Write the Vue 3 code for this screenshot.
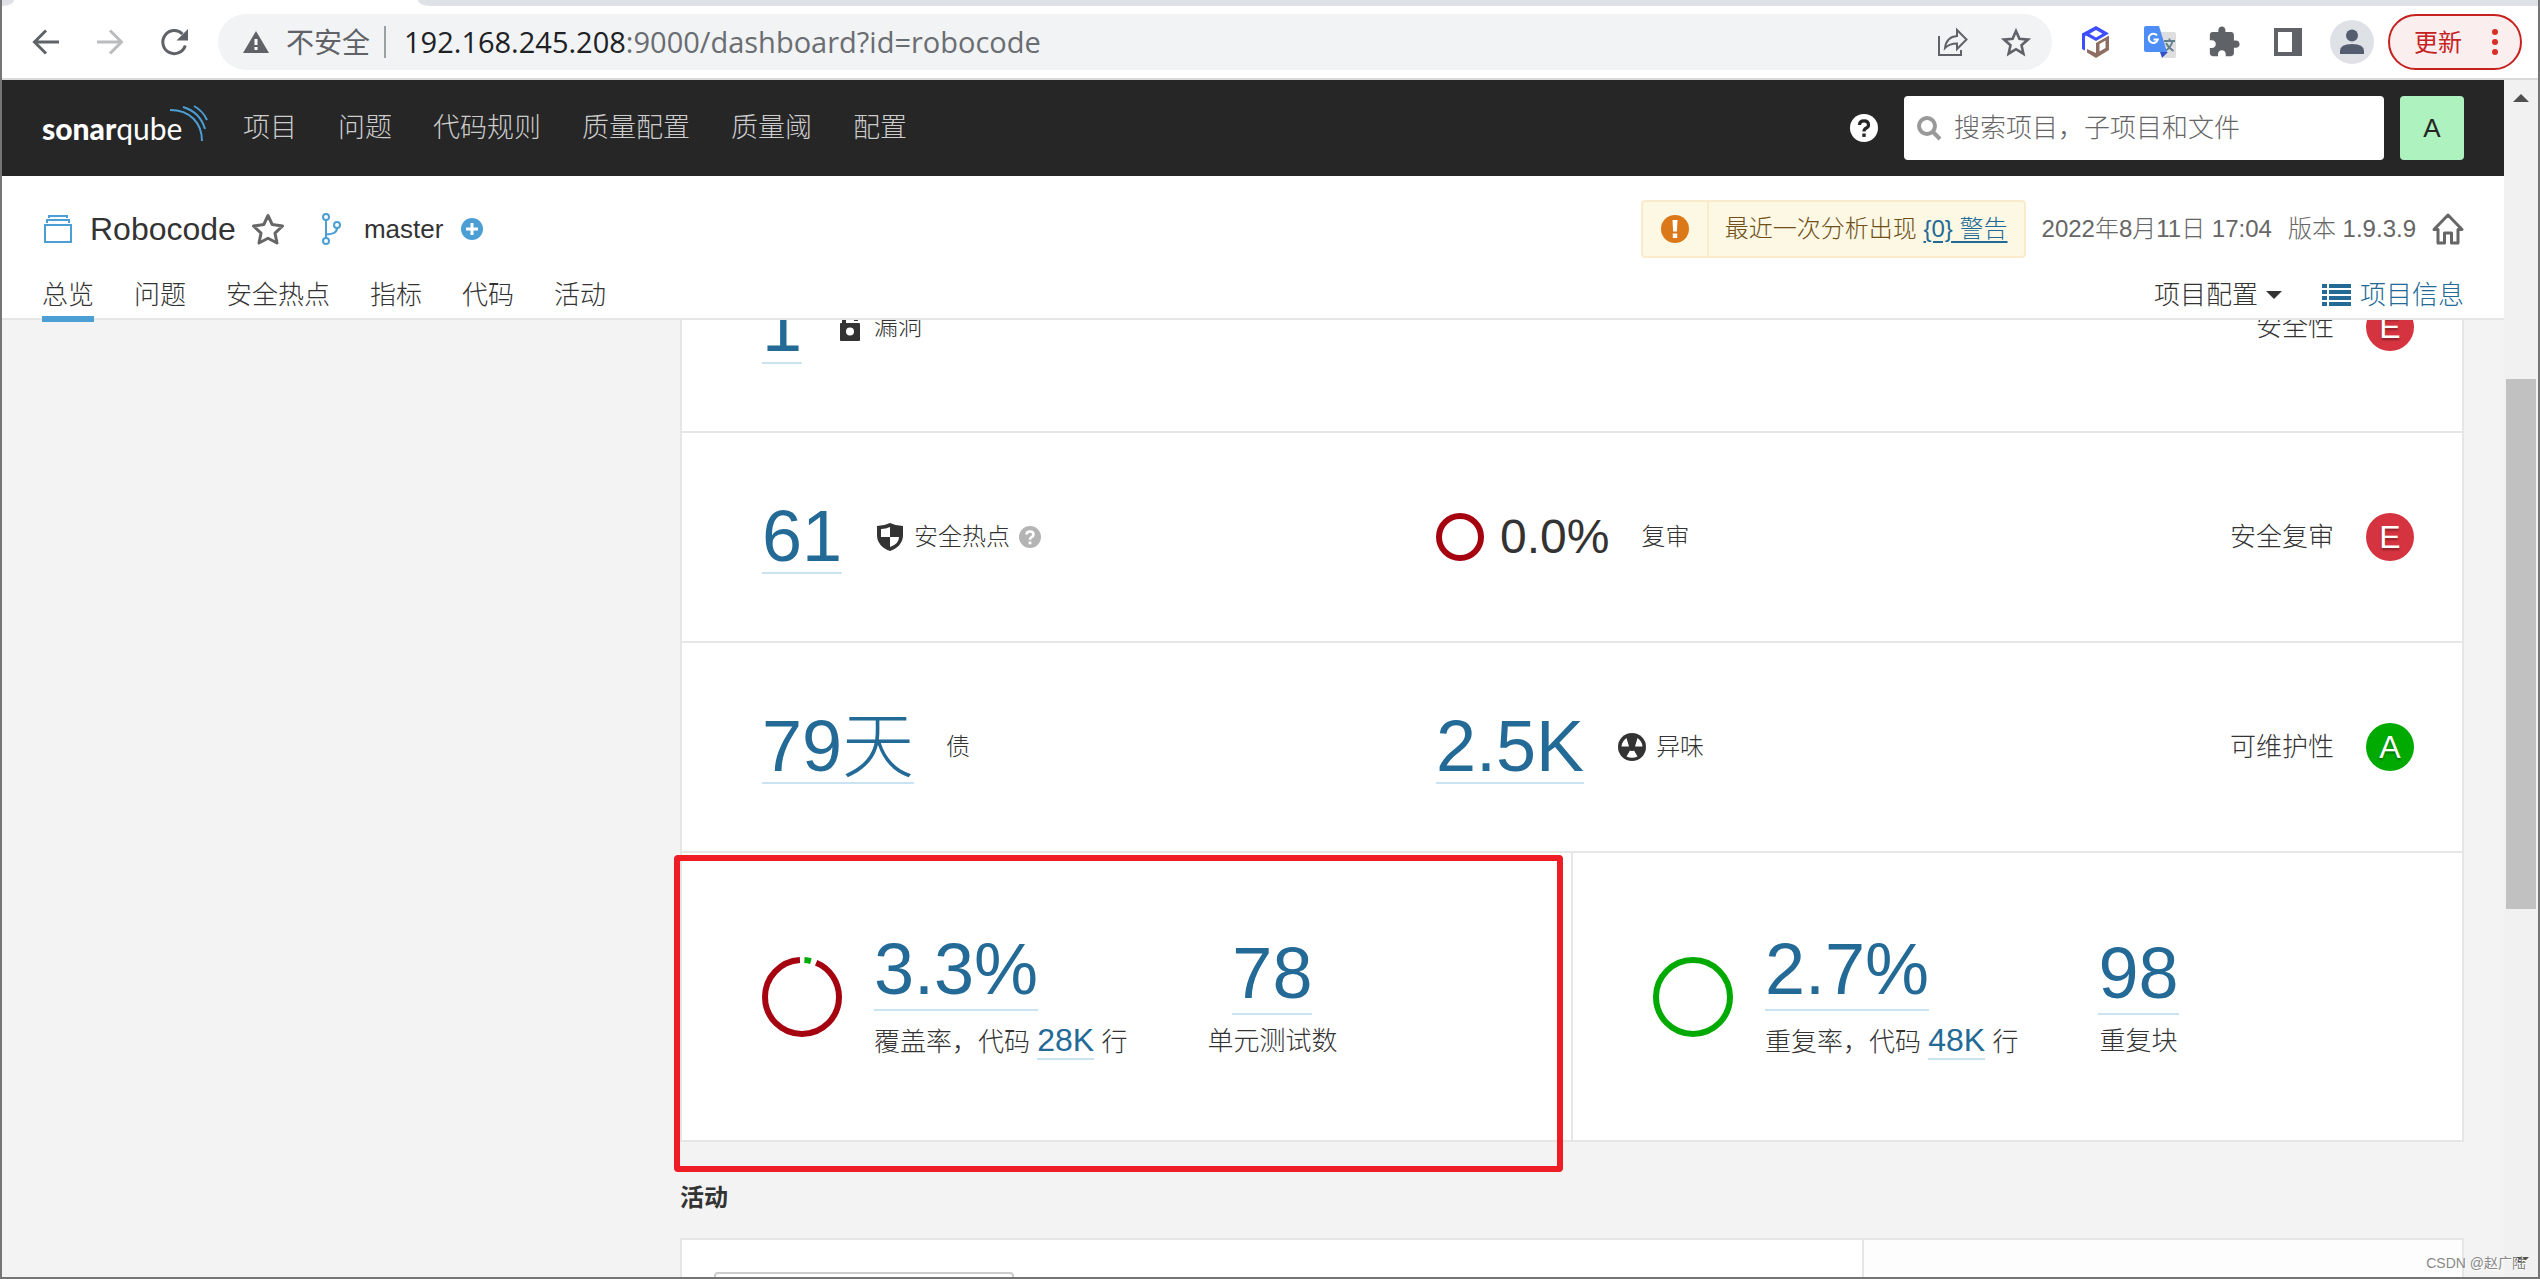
<script setup>
import { ref } from 'vue'

const globalNav = ['项目', '问题', '代码规则', '质量配置', '质量阈', '配置']
const projectTabs = ['总览', '问题', '安全热点', '指标', '代码', '活动']
const activeTab = ref('总览')
const query = ref('')
</script>

<template>
  <div class="window">
    <div class="tab-strip">
      <span class="strip-left"></span>
      <span class="strip-active"></span>
      <span class="strip-right"></span>
    </div>

    <div class="toolbar">
      <div class="nav-buttons">
        <button type="button" aria-label="后退">
          <svg width="32" height="32" viewBox="0 0 32 32" fill="none" stroke="#5f6368" stroke-width="3"><path d="M29 16H5M16 4.500L4.500 16L16 27.500" /></svg>
        </button>
        <button type="button" aria-label="前进">
          <svg width="32" height="32" viewBox="0 0 32 32" fill="none" stroke="#babcbe" stroke-width="3"><path d="M3 16H27M16 4.500L27.500 16L16 27.500" /></svg>
        </button>
        <button type="button" aria-label="重新加载">
          <svg width="32" height="32" viewBox="0 0 32 32"><path d="M27.300 19.500A11.500 11.500 0 1 1 24.500 8" fill="none" stroke="#5f6368" stroke-width="3" /><path d="M30 3V14.500H18.500Z" fill="#5f6368" /></svg>
        </button>
      </div>
      <div class="omnibox">
        <svg width="28" height="26" viewBox="0 0 28 26"><path d="M14 2L27 24H1Z" fill="#5f6368" /><path d="M12.500 10h3v6h-3zM12.500 18h3v3h-3z" fill="#fff" /></svg>
        <span class="insecure">不安全</span>
        <span class="omni-sep"></span>
        <span class="url"><b>192.168.245.208</b>:9000/dashboard?id=robocode</span>
        <button type="button" aria-label="分享">
          <svg width="32" height="32" viewBox="0 0 32 32" fill="none" stroke="#5f6368" stroke-width="2"><path d="M3 10V29H25V24" /><path d="M9 22C10 14 14 10.500 21 10V4L30.500 13.500L21 23V17.500C15 17.500 12 19 9 22Z" /></svg>
        </button>
        <button type="button" aria-label="收藏">
          <svg width="32" height="32" viewBox="0 0 32 32" fill="none" stroke="#5f6368" stroke-width="2.600"><path d="M16 5L19.400 12.800L28 13.600L21.500 19.300L23.400 27.700L16 23.200L8.600 27.700L10.500 19.300L4 13.600L12.600 12.800Z" /></svg>
        </button>
      </div>
      <div class="extensions">
        <button type="button" aria-label="扩展 1">
          <svg width="28" height="32" viewBox="0 0 28 32"><path d="M14 0L27 7.500L14 15L4 9.500L3 10.500V24.500L0 23V7.500ZM14 4L7.500 7.800L14 11.600L20.500 7.800Z" fill="#3d4dff" fill-rule="evenodd" /><path d="M27 9.500V24L14 32L5 26.500V23L14 27V17ZM23.500 14.500L17.500 18V25.500L23.500 22Z" fill="#8d6e63" fill-rule="evenodd" /></svg>
        </button>
        <button type="button" aria-label="翻译">
          <svg width="32" height="32" viewBox="0 0 32 32"><path d="M14 6H30Q32 6 32 8V30Q32 32 30 32H20Z" fill="#dedede" /><path d="M20 15h11M25.500 12.500v2.500M28.500 15.500Q26.500 22 20.500 25.500M22 17Q25 22.500 29.500 25" fill="none" stroke="#607d8b" stroke-width="1.800" /><path d="M16 26H24L18 32Z" fill="#3350c4" /><path d="M2 0H15L23 26H2Q0 26 0 24V2Q0 0 2 0Z" fill="#4e8df5" /><path d="M13 9.500A4.600 4.600 0 1 0 13.800 13.500H9.500" fill="none" stroke="#fff" stroke-width="2" /></svg>
        </button>
        <button type="button" aria-label="扩展程序">
          <svg width="34" height="34" viewBox="0 0 24 24" fill="#5f6368"><path d="M20.500 11H19V7c0-1.100-.9-2-2-2h-4V3.500C13 2.120 11.880 1 10.500 1S8 2.120 8 3.500V5H4c-1.100 0-2 .9-2 2v3.800h1.500c1.490 0 2.700 1.210 2.700 2.700S4.990 16.200 3.500 16.200H2V20c0 1.100.9 2 2 2h3.800v-1.500c0-1.490 1.210-2.700 2.700-2.700s2.700 1.210 2.700 2.700V22H17c1.100 0 2-.9 2-2v-4h1.500c1.380 0 2.500-1.120 2.500-2.500S21.880 11 20.500 11z" /></svg>
        </button>
        <button type="button" aria-label="侧边栏">
          <svg width="28" height="28" viewBox="0 0 28 28"><path d="M0 0H28V28H0ZM4 4V24H18V4Z" fill="#5f6368" fill-rule="evenodd" /></svg>
        </button>
        <button type="button" aria-label="用户">
          <svg width="44" height="44" viewBox="0 0 44 44"><circle cx="22" cy="22" r="22" fill="#dee1e6" /><circle cx="22" cy="15.500" r="6" fill="#555e70" /><path d="M10 34V31Q10 24 22 24T34 31V34Z" fill="#555e70" /></svg>
        </button>
      </div>
      <button type="button" class="update">
        <span>更新</span>
        <svg width="6" height="28" viewBox="0 0 6 28" fill="#d93025"><circle cx="3" cy="4" r="3" /><circle cx="3" cy="14" r="3" /><circle cx="3" cy="24" r="3" /></svg>
      </button>
    </div>

    <div class="viewport">
      <div class="page">
        <header class="global">
          <a href="#" class="logo" aria-label="sonarqube">
            <svg width="166" height="46" viewBox="0 0 166 46">
              <text x="0" y="35" fill="#fff" class="logo-text"><tspan class="logo-bold">sonar</tspan><tspan>qube</tspan></text>
              <g fill="none" stroke="#4b9fd5" stroke-width="2"><path d="M128 5C148 5 160 18 160 36" /><path d="M141 2Q158 7 163 24" /><path d="M152 1Q161 6 165 15" /></g>
            </svg>
          </a>
          <nav class="global-nav">
            <a v-for="item in globalNav" :key="item" href="#">{{ item }}</a>
          </nav>
          <button type="button" class="help" aria-label="帮助">
            <svg width="28" height="28" viewBox="0 0 28 28"><circle cx="14" cy="14" r="14" fill="#fff" /><path d="M9.500 11Q9.500 6.800 14 6.800T18.500 11Q18.500 13 16 14.200Q14 15.200 14 17.500" fill="none" stroke="#262626" stroke-width="3.200" /><path d="M12.300 19.500h3.400v3.400h-3.400z" fill="#262626" /></svg>
          </button>
          <label class="search">
            <svg width="26" height="26" viewBox="0 0 26 26" fill="none" stroke="#999" stroke-width="4"><circle cx="11" cy="11" r="8" /><path d="M17 17L24 24" /></svg>
            <input v-model="query" type="search" placeholder="搜索项目，子项目和文件" aria-label="搜索">
          </label>
          <button type="button" class="avatar">A</button>
        </header>

        <div class="context">
          <div class="context-top">
            <svg width="32" height="32" viewBox="0 0 32 32" fill="none" stroke="#4b9fd5" stroke-width="2"><path d="M3 12H29V29H3Z" /><path d="M5 10V7H27V10M7 5V3H25V5" /></svg>
            <h1>Robocode</h1>
            <button type="button" class="fav" aria-label="收藏项目">
              <svg width="36" height="34" viewBox="0 0 36 34" fill="none" stroke="#666" stroke-width="3" stroke-linejoin="round"><path d="M18 3.500L22.200 12.500L32.500 14L25 21.200L27 31L18 26.200L9 31L11 21.200L3.500 14L13.800 12.500Z" /></svg>
            </button>
            <svg class="branch" width="32" height="34" viewBox="0 0 32 34" fill="none" stroke="#4b9fd5" stroke-width="2"><circle cx="10" cy="5" r="3" /><circle cx="10" cy="29" r="3" /><circle cx="21" cy="13" r="3" /><path d="M10 8V26M21 16C21 21 17 22 10 22.500" /></svg>
            <span class="branch-name">master</span>
            <svg width="22" height="22" viewBox="0 0 22 22"><circle cx="11" cy="11" r="11" fill="#4b9fd5" /><path d="M11 5V17M5 11H17" stroke="#fff" stroke-width="3" /></svg>
            <div class="alert">
              <span class="alert-icon">
                <svg width="28" height="28" viewBox="0 0 28 28"><circle cx="14" cy="14" r="14" fill="#db781a" /><path d="M11.500 5h5l-.6 11.500h-3.800zM11.800 18.500h4.400v4.400h-4.400z" fill="#fff" /></svg>
              </span>
              <span class="alert-text">最近一次分析出现 <a href="#">{0} 警告</a></span>
            </div>
            <span class="meta">2022年8月11日 17:04</span>
            <span class="meta">版本 1.9.3.9</span>
            <a href="#" class="home" aria-label="主页">
              <svg width="32" height="32" viewBox="0 0 32 32" fill="none" stroke="#666" stroke-width="3" stroke-linejoin="round"><path d="M16 2L30 16.500H26V30H19.500V20H12.500V30H6V16.500H2Z" /></svg>
            </a>
          </div>
          <div class="context-tabs">
            <nav>
              <a v-for="tab in projectTabs" :key="tab" href="#" :class="{ active: tab === activeTab }" @click.prevent="activeTab = tab">{{ tab }}</a>
            </nav>
            <button type="button" class="settings">项目配置<span class="caret"></span></button>
            <a href="#" class="info">
              <svg width="30" height="24" viewBox="0 0 30 24" fill="#236a97"><path d="M0 1h5v4H0zM7 1h22v4H7zM0 7h5v4H0zM7 7h22v4H7zM0 13h5v4H0zM7 13h22v4H7zM0 19h5v4H0zM7 19h22v4H7z" /></svg>项目信息</a>
          </div>
        </div>

        <main class="content">
          <section class="card measures">
            <div class="row">
              <div class="measure">
                <a href="#" class="big">1</a>
                <svg width="32" height="32" viewBox="0 0 32 32"><path d="M10 14V7Q10 3 16 3T22 7V10" fill="none" stroke="#333" stroke-width="4" /><path d="M7 12H25Q26 12 26 13V29Q26 30 25 30H7Q6 30 6 29V13Q6 12 7 12ZM16 16.500A4 4 0 1 0 16 24.500A4 4 0 1 0 16 16.500Z" fill="#333" fill-rule="evenodd" /></svg>
                <span>漏洞</span>
              </div>
              <div class="measure"></div>
              <div class="rating">安全性<span class="badge e">E</span></div>
            </div>
            <div class="row">
              <div class="measure">
                <a href="#" class="big">61</a>
                <svg width="32" height="32" viewBox="0 0 32 32"><path d="M16 2Q22 5 29 5V14Q29 25 16 30Q3 25 3 14V5Q10 5 16 2Z" fill="#333" /><path d="M16 6V16H7V8Q12 8 16 6ZM16 16H25Q25 23 16 26Z" fill="#fff" /></svg>
                <span>安全热点</span>
                <svg class="tip" width="24" height="24" viewBox="0 0 24 24"><circle cx="12" cy="12" r="11" fill="#b4b4b4" /><path d="M8.500 9.500Q8.500 6.500 12 6.500T15.500 9.500Q15.500 11.200 13.500 12.200Q12 13 12 14.800" fill="none" stroke="#fff" stroke-width="2.600" /><path d="M10.600 16.500h2.800v2.800h-2.800z" fill="#fff" /></svg>
              </div>
              <div class="measure">
                <svg class="ring" width="48" height="48" viewBox="0 0 48 48"><circle cx="24" cy="24" r="21" fill="none" stroke="#a4030f" stroke-width="6" /></svg>
                <span class="percent">0.0%</span>
                <span class="reviewed">复审</span>
              </div>
              <div class="rating">安全复审<span class="badge e">E</span></div>
            </div>
            <div class="row">
              <div class="measure">
                <a href="#" class="big">79天</a>
                <span>债</span>
              </div>
              <div class="measure">
                <a href="#" class="big">2.5K</a>
                <svg width="32" height="32" viewBox="0 0 32 32"><circle cx="16" cy="16" r="14" fill="#333" /><path d="M13 15.500H5.500Q6 10 10.500 7ZM19 15.500H26.500Q26 10 21.500 7ZM14 19.500L10.500 25.500Q16 28 21.500 25.500L18 19.500Q16 20.500 14 19.500Z" fill="#fff" /></svg>
                <span>异味</span>
              </div>
              <div class="rating">可维护性<span class="badge a">A</span></div>
            </div>
            <div class="halves">
              <div class="half">
                <svg width="80" height="80" viewBox="0 0 80 80"><g transform="rotate(-90 40 40)" fill="none" stroke-width="6"><circle cx="40" cy="40" r="37" stroke="#a4030f" stroke-dasharray="215.500 17" stroke-dashoffset="-14.500" /><circle cx="40" cy="40" r="37" stroke="#00aa00" stroke-dasharray="6.500 226" stroke-dashoffset="-2.500" /></g></svg>
                <div class="ratio">
                  <a href="#" class="big">3.3%</a>
                  <p>覆盖率，代码 <a href="#">28K</a> 行</p>
                </div>
                <div class="count">
                  <a href="#" class="big">78</a>
                  <span>单元测试数</span>
                </div>
                <div class="highlight"></div>
              </div>
              <div class="half">
                <svg width="80" height="80" viewBox="0 0 80 80"><circle cx="40" cy="40" r="37" fill="none" stroke="#00aa00" stroke-width="6" /></svg>
                <div class="ratio">
                  <a href="#" class="big">2.7%</a>
                  <p>重复率，代码 <a href="#">48K</a> 行</p>
                </div>
                <div class="count">
                  <a href="#" class="big">98</a>
                  <span>重复块</span>
                </div>
              </div>
            </div>
          </section>

          <h2>活动</h2>
          <section class="card activity">
            <div class="graph"><select aria-label="图表"></select></div>
            <div class="events"></div>
          </section>
        </main>
      </div>

      <div class="scrollbar">
        <span class="arrow up"></span>
        <span class="track-before"></span>
        <span class="thumb"></span>
        <span class="track-after"></span>
        <span class="arrow down"></span>
      </div>
    </div>
    <span class="watermark">CSDN @赵广陆</span>
  </div>
</template>

<style>
body {
  margin: 0;
}
</style>

<style scoped>
* {
  box-sizing: border-box;
}
svg {
  display: block;
  flex: none;
}
a {
  color: #236a97;
  text-decoration: none;
}
button {
  padding: 0;
  border: 0;
  background: none;
  font: inherit;
  color: inherit;
}
.window {
  position: relative;
  display: flex;
  flex-direction: column;
  height: 100vh;
  overflow: hidden;
  border: 2px solid #757575;
  border-top: 0;
  background: #fff;
  color: #333;
  font-family: "Liberation Sans", "Noto Sans CJK SC", sans-serif;
  font-size: 26px;
  font-weight: 300;
  line-height: 32px;
  white-space: nowrap;
}
.tab-strip {
  display: flex;
  flex: none;
  height: 6px;
}
.strip-left {
  width: 12px;
  background: #dee1e6;
  border-bottom-right-radius: 12px 6px;
}
.strip-active {
  width: 404px;
}
.strip-right {
  flex: 1;
  background: #dee1e6;
  border-bottom-left-radius: 12px 6px;
}
.toolbar {
  display: flex;
  flex: none;
  align-items: center;
  height: 74px;
  padding: 0 16px 0 28px;
  border-bottom: 2px solid #dadada;
  font-family: "Open Sans", "Noto Sans CJK SC", sans-serif;
  font-weight: 400;
}
.nav-buttons {
  display: flex;
  gap: 32px;
  margin-right: 28px;
}
.omnibox {
  display: flex;
  flex: 1;
  align-items: center;
  height: 56px;
  padding: 0 20px 0 24px;
  border-radius: 28px;
  background: #f1f3f4;
  color: #5f6368;
  font-size: 28px;
}
.insecure {
  margin-left: 16px;
}
.omni-sep {
  width: 2px;
  height: 32px;
  margin: 0 18px 0 14px;
  background: #9aa0a6;
}
.url {
  flex: 1;
  color: #6a6d71;
  font-size: 29px;
}
.url b {
  font-weight: 400;
  color: #202124;
}
.omnibox button + button {
  margin-left: 32px;
}
.extensions {
  display: flex;
  align-items: center;
  gap: 20px;
  margin: 0 14px 0 22px;
}
.extensions button {
  display: flex;
  justify-content: center;
  width: 44px;
}
.update {
  display: flex;
  align-items: center;
  gap: 30px;
  height: 56px;
  padding: 0 22px 0 24px;
  border: 2px solid #c5221f;
  border-radius: 28px;
  background: #faeeee;
  color: #c5221f;
  font-size: 24px;
}
.viewport {
  display: flex;
  flex: 1;
  min-height: 0;
}
.page {
  display: flex;
  flex: 1;
  flex-direction: column;
  min-width: 0;
  background: #f3f3f3;
}
.global {
  display: flex;
  flex: none;
  align-items: center;
  height: 96px;
  padding: 0 40px;
  background: #262626;
}
.logo-text {
  font-family: Lato, sans-serif;
  font-size: 30px;
  font-weight: 400;
}
.logo-bold {
  font-weight: 900;
}
.global-nav {
  display: flex;
  flex: 1;
  gap: 41px;
  margin-left: 35px;
  font-size: 27px;
}
.global-nav a {
  color: #ccc;
}
.search {
  display: flex;
  align-items: center;
  gap: 12px;
  width: 480px;
  height: 64px;
  margin: 0 16px 0 26px;
  padding: 0 12px;
  border-radius: 4px;
  background: #fff;
}
.search input {
  flex: 1;
  min-width: 0;
  padding: 0;
  border: 0;
  outline: 0;
  background: none;
  font: inherit;
  line-height: normal;
  color: #333;
}
.search input::placeholder {
  color: #666;
}
.avatar {
  width: 64px;
  height: 64px;
  border-radius: 4px;
  background: #aef2c0;
  color: #262626;
}
.context {
  position: relative;
  z-index: 1;
  flex: none;
  height: 144px;
  padding: 24px 40px 0;
  border-bottom: 2px solid #e6e6e6;
  background: #fff;
}
.context-top {
  display: flex;
  align-items: center;
  height: 58px;
}
h1 {
  margin: 0 14px 0 16px;
  font-size: 32px;
  font-weight: 400;
}
.branch {
  margin-left: 30px;
}
.branch-name {
  margin: 0 18px 0 16px;
}
.alert {
  display: flex;
  height: 58px;
  margin-left: auto;
  border: 2px solid #faebcc;
  border-radius: 4px;
  background: #fcf8e3;
  color: #6f4f17;
  font-size: 24px;
  line-height: 54px;
}
.alert-icon {
  display: flex;
  align-items: center;
  padding: 0 18px;
  border-right: 2px solid #faebcc;
}
.alert-text {
  padding: 0 16px;
}
.alert a {
  text-decoration: underline;
  text-decoration-thickness: 2px;
  text-underline-offset: 4px;
}
.meta {
  margin-left: 16px;
  color: #666;
  font-size: 24px;
}
.home {
  margin-left: 16px;
}
.context-tabs {
  display: flex;
  height: 46px;
  margin-top: 14px;
  line-height: 46px;
}
.context-tabs nav {
  display: flex;
  flex: 1;
  gap: 40px;
}
.context-tabs nav a {
  height: 50px;
  border-bottom: 6px solid transparent;
  color: #333;
}
.context-tabs nav .active {
  border-color: #4b9fd5;
}
.settings {
  display: flex;
  align-items: center;
  gap: 8px;
  height: 46px;
}
.caret {
  border: 8px solid transparent;
  border-top-color: #333;
  border-bottom: 0;
}
.info {
  display: flex;
  align-items: center;
  gap: 8px;
  height: 46px;
  margin-left: 40px;
}
.content {
  flex: 1;
  min-height: 0;
  overflow: hidden;
  padding: 0 40px 0 678px;
}
.card {
  border: 2px solid #e6e6e6;
  background: #fff;
}
/* scrolled so that the first row sits partly under the project header */
.measures {
  margin-top: -99px;
}
.row {
  display: grid;
  grid-template-columns: 1fr 1fr 304px;
  align-items: center;
  height: 210px;
  padding: 0 48px 0 80px;
  border-bottom: 2px solid #e6e6e6;
}
.measure {
  display: flex;
  align-items: center;
  gap: 8px;
  font-size: 24px;
}
.big {
  display: inline-block;
  border-bottom: 2px solid #cae3f2;
  font-size: 72px;
  line-height: 72px;
}
.measure .big {
  margin-right: 24px;
}
.measure .ring {
  margin-right: 8px;
}
.percent {
  font-size: 48px;
}
.reviewed {
  margin-left: 24px;
}
.rating {
  display: flex;
  align-items: center;
  justify-content: flex-end;
  gap: 32px;
}
.badge {
  width: 48px;
  height: 48px;
  border-radius: 50%;
  color: #fff;
  font-size: 32px;
  line-height: 48px;
  text-align: center;
  text-shadow: 0 2px 2px rgba(0, 0, 0, 0.35);
}
.badge.e {
  background: #d4333f;
}
.badge.a {
  background: #00aa00;
}
.halves {
  display: flex;
}
.half {
  position: relative;
  display: flex;
  flex: 1;
  align-items: center;
  height: 287px;
  padding-left: 80px;
}
.half + .half {
  border-left: 2px solid #e6e6e6;
}
.ratio {
  display: flex;
  flex-direction: column;
  align-items: flex-start;
  margin: 0 80px 0 32px;
}
.ratio .big {
  padding-bottom: 4px;
}
.ratio p {
  margin: 11px 0 0;
  line-height: 36px;
}
.ratio p a {
  display: inline-block;
  border-bottom: 2px solid #cae3f2;
  font-size: 32px;
  line-height: 36px;
}
.count {
  display: flex;
  flex-direction: column;
  align-items: center;
  line-height: 30px;
}
.count .big {
  padding-bottom: 4px;
  margin-bottom: 11px;
}
.highlight {
  position: absolute;
  inset: 2px 8px -32px -8px;
  border: 6px solid #ee1c25;
  border-radius: 4px;
}
h2 {
  margin: 38px 0 22px;
  font-size: 24px;
  line-height: 36px;
}
.activity {
  display: flex;
  height: 400px;
}
.graph {
  flex: 1;
  padding: 32px;
}
.graph select {
  width: 300px;
  height: 48px;
  border: 2px solid #ccc;
  border-radius: 4px;
  background: #fff;
}
.events {
  width: 600px;
  border-left: 2px solid #e6e6e6;
  background: #fdfdfd;
}
.scrollbar {
  display: flex;
  flex: none;
  flex-direction: column;
  width: 34px;
  padding: 0 2px;
  background: #f1f1f1;
}
.arrow {
  height: 34px;
}
.arrow::before {
  content: "";
  display: block;
  width: 0;
  margin: 14px auto 0;
  border: 8px solid transparent;
}
.arrow.up::before {
  border-top: 0;
  border-bottom-color: #505050;
}
.arrow.down::before {
  border-bottom: 0;
  border-top-color: #505050;
}
.track-before {
  flex: 265;
}
.thumb {
  flex: 530;
  background: #c1c1c1;
}
.track-after {
  flex: 334;
}
.watermark {
  position: absolute;
  right: 12px;
  bottom: 4px;
  color: #888;
  font-size: 14px;
  font-weight: 400;
  line-height: 20px;
  text-shadow: 1px 1px 0 #fff;
}
</style>
